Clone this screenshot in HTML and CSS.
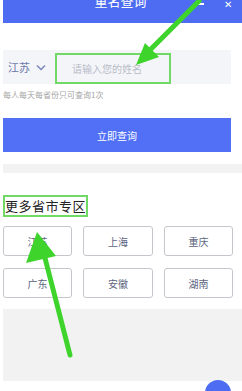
FILE: index.html
```
<!DOCTYPE html>
<html>
<head>
  <title>重名查询</title>
  <link rel="stylesheet" href="styles.css">
</head>
<body>
  <div class="page">
    <div class="header">
      <div class="header-title">重名查询</div>
      <div class="header-icons"><span class="dash"></span><span class="close">✕</span></div>
    </div>

    <div class="search">
      <div class="province">江苏
        <svg width="10" height="7" viewBox="0 0 10 7"><path d="M1 1.5 L5 5.5 L9 1.5" fill="none" stroke="#7b88b8" stroke-width="1.5"/></svg>
      </div>
      <div class="name-input">请输入您的姓名</div>
    </div>
    <div class="note">每人每天每省份只可查询1次</div>

    <div class="query-btn">立即查询</div>

    <div class="divider"></div>

    <div class="section-title">更多省市专区</div>

    <div class="cities">
      <div class="city">江苏</div>
      <div class="city">上海</div>
      <div class="city">重庆</div>
      <div class="city">广东</div>
      <div class="city">安徽</div>
      <div class="city">湖南</div>
    </div>

    <div class="bottom"></div>
  </div>

  <div class="fab"></div>

  <svg class="arrows" width="242" height="391" viewBox="0 0 242 391">
    <line x1="199" y1="1" x2="150" y2="50" stroke="#3ed42c" stroke-width="5" stroke-linecap="round"/>
    <polygon points="136,65 145,43 159,57" fill="#3ed42c"/>
    <line x1="70" y1="355" x2="45" y2="258" stroke="#3ed42c" stroke-width="5" stroke-linecap="round"/>
    <polygon points="37,232 26,263 56,256" fill="#3ed42c"/>
  </svg>
</body>
</html>
```

FILE: styles.css
```
body {
  margin: 0;
  font-family: "Noto Sans CJK SC", "Noto Sans", sans-serif;
  background: #fff;
  overflow: hidden;
}

.page {
  padding-left: 3px;
  height: 391px;
  box-sizing: border-box;
}

.header {
  height: 23px;
  background-color: #4d6cf2;
  position: relative;
  overflow: hidden;
}

.header-title {
  text-align: center;
  color: #fff;
  font-size: 13px;
  line-height: 14px;
  margin-top: -6px;
  padding-right: 4px;
}

.header-icons {
  position: absolute;
  top: 0;
  right: 10px;
  display: flex;
  gap: 20px;
  color: #fff;
  font-size: 10px;
  line-height: 8px;
}

.header-icons .dash {
  display: block;
  width: 8px;
  height: 2px;
  background: #fff;
  margin-top: 3px;
}

.search {
  margin-top: 27px;
  width: 228px;
  height: 34px;
  background-color: #f4f5f9;
  display: flex;
  align-items: center;
}

.province {
  display: flex;
  align-items: center;
  gap: 6px;
  padding-left: 5px;
  width: 42px;
  color: #6b79aa;
  font-size: 11px;
}

.name-input {
  margin-left: 5px;
  margin-top: 3px;
  width: 116px;
  height: 31px;
  box-sizing: border-box;
  border: 2px solid #71d966;
  display: flex;
  align-items: center;
  padding-left: 15px;
  color: #b8bcc8;
  font-size: 10px;
}

.note {
  font-size: 8px;
  color: #a5a5a5;
  margin-top: 6px;
  line-height: 10px;
}

.query-btn {
  margin-top: 18px;
  width: 228px;
  height: 34px;
  background-color: #5170f6;
  color: #fff;
  font-size: 10px;
  display: flex;
  align-items: center;
  justify-content: center;
}

.divider {
  margin-top: 12px;
  height: 9px;
  background: #f2f2f2;
}

.section-title {
  margin-top: 22px;
  width: 81px;
  height: 18px;
  border: 2px solid #71d966;
  font-size: 13px;
  line-height: 18px;
  color: #222;
  white-space: nowrap;
  overflow: hidden;
  letter-spacing: 0.5px;
}

.cities {
  margin-top: 9px;
  display: grid;
  grid-template-columns: 69px 70px 69px;
  column-gap: 11px;
  row-gap: 12px;
  width: 230px;
}

.city {
  height: 30px;
  border: 1px solid #c4c6cc;
  border-radius: 3px;
  box-sizing: border-box;
  display: flex;
  align-items: center;
  justify-content: center;
  color: #5c6580;
  font-size: 10px;
}

.bottom {
  margin-top: 11px;
  height: 72px;
  background: #f2f2f2;
}

.fab {
  position: absolute;
  left: 205px;
  top: 380px;
  width: 26px;
  height: 26px;
  border-radius: 50%;
  background: #4d6cf2;
}

.arrows {
  position: absolute;
  left: 0;
  top: 0;
  pointer-events: none;
}
```
